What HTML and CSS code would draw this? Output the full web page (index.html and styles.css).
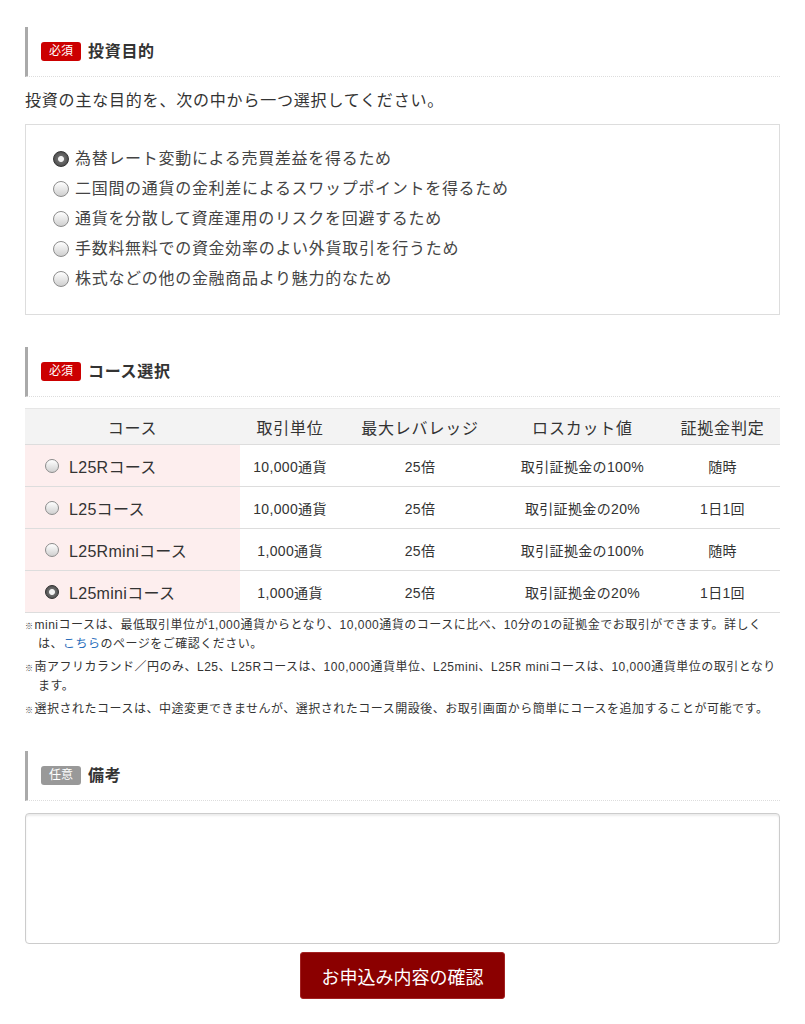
FILE: index.html
```html
<!DOCTYPE html>
<html lang="ja">

<head>
    <meta charset="UTF-8">
    <meta name="viewport" content="width=device-width, initial-scale=1.0">
    <title>お申込み - 投資目的・コース選択</title>
    <link rel="stylesheet" href="styles.css">
</head>

<body>
    <form class="apply-form">
        <!-- 投資目的 -->
        <section class="field">
            <h2 class="field-head"><span class="badge badge-required">必須</span>投資目的</h2>
            <p class="field-desc">投資の主な目的を、次の中から一つ選択してください。</p>
            <div class="choice-box">
                <label class="choice"><input type="radio" name="purpose" class="radio" checked>為替レート変動による売買差益を得るため</label>
                <label class="choice"><input type="radio" name="purpose" class="radio">二国間の通貨の金利差によるスワップポイントを得るため</label>
                <label class="choice"><input type="radio" name="purpose" class="radio">通貨を分散して資産運用のリスクを回避するため</label>
                <label class="choice"><input type="radio" name="purpose" class="radio">手数料無料での資金効率のよい外貨取引を行うため</label>
                <label class="choice"><input type="radio" name="purpose" class="radio">株式などの他の金融商品より魅力的なため</label>
            </div>
        </section>

        <!-- コース選択 -->
        <section class="field">
            <h2 class="field-head"><span class="badge badge-required">必須</span>コース選択</h2>
            <table class="course-table">
                <colgroup>
                    <col class="col-course">
                    <col class="col-unit">
                    <col class="col-leverage">
                    <col class="col-losscut">
                    <col class="col-margin">
                </colgroup>
                <thead>
                    <tr>
                        <th>コース</th>
                        <th>取引単位</th>
                        <th>最大レバレッジ</th>
                        <th>ロスカット値</th>
                        <th>証拠金判定</th>
                    </tr>
                </thead>
                <tbody>
                    <tr>
                        <td class="course-cell"><label class="course"><input type="radio" name="course" class="radio radio-sm">L25Rコース</label></td>
                        <td>10,000通貨</td>
                        <td>25倍</td>
                        <td>取引証拠金の100%</td>
                        <td>随時</td>
                    </tr>
                    <tr>
                        <td class="course-cell"><label class="course"><input type="radio" name="course" class="radio radio-sm">L25コース</label></td>
                        <td>10,000通貨</td>
                        <td>25倍</td>
                        <td>取引証拠金の20%</td>
                        <td>1日1回</td>
                    </tr>
                    <tr>
                        <td class="course-cell"><label class="course"><input type="radio" name="course" class="radio radio-sm">L25Rminiコース</label></td>
                        <td>1,000通貨</td>
                        <td>25倍</td>
                        <td>取引証拠金の100%</td>
                        <td>随時</td>
                    </tr>
                    <tr>
                        <td class="course-cell"><label class="course"><input type="radio" name="course" class="radio radio-sm" checked>L25miniコース</label></td>
                        <td>1,000通貨</td>
                        <td>25倍</td>
                        <td>取引証拠金の20%</td>
                        <td>1日1回</td>
                    </tr>
                </tbody>
            </table>
            <div class="notes">
                <p class="note"><span class="mark">※</span>miniコースは、最低取引単位が1,000通貨からとなり、10,000通貨のコースに比べ、10分の1の証拠金でお取引ができます。詳しくは、<a href="#" class="note-link">こちら</a>のページをご確認ください。</p>
                <p class="note"><span class="mark">※</span>南アフリカランド／円のみ、L25、L25Rコースは、100,000通貨単位、L25mini、L25R miniコースは、10,000通貨単位の取引となります。</p>
                <p class="note"><span class="mark">※</span>選択されたコースは、中途変更できませんが、選択されたコース開設後、お取引画面から簡単にコースを追加することが可能です。</p>
            </div>
        </section>

        <!-- 備考 -->
        <section class="field field-remarks">
            <h2 class="field-head"><span class="badge badge-optional">任意</span>備考</h2>
            <textarea class="remarks" name="remarks"></textarea>
        </section>

        <div class="actions">
            <button type="button" class="submit-btn">お申込み内容の確認</button>
        </div>
    </form>
</body>

</html>
```

FILE: styles.css
```css
/* Global Styles */

* {
    box-sizing: border-box;
    margin: 0;
    padding: 0;
}

body {
    font-family: "Liberation Sans", "Noto Sans CJK JP", sans-serif;
    color: #333;
    background-color: #ffffff;
    padding: 27px 25px 0;
}

/* Field Sections */

.field {
    margin-bottom: 32px;
}

.field-head {
    display: flex;
    align-items: center;
    gap: 7px;
    border-left: 3px solid #aaaaaa;
    border-bottom: 1px dotted #dddddd;
    padding: 14px 13px;
    font-size: 16px;
    line-height: 21px;
    font-weight: bold;
    letter-spacing: 0.7px;
    color: #333;
}

.badge {
    font-size: 12px;
    line-height: 15px;
    font-weight: normal;
    letter-spacing: 0;
    color: white;
    padding: 2px 8px;
    border-radius: 3px;
}

.badge-required {
    background-color: #cc0000;
}

.badge-optional {
    background-color: #999999;
}

.field-desc {
    margin: 12px 0 11px;
    font-size: 16px;
    line-height: 24px;
    letter-spacing: 0.8px;
}

/* Radio Choices */

.choice-box {
    border: 1px solid #dddddd;
    padding: 19px 27px 20px;
}

.choice {
    display: flex;
    align-items: center;
    gap: 6px;
    font-size: 16px;
    line-height: 30px;
    letter-spacing: 0.7px;
    color: #444;
}

.radio {
    appearance: none;
    -webkit-appearance: none;
    flex: none;
    width: 16px;
    height: 16px;
    border-radius: 50%;
    border: 1px solid #8c8c8c;
    background: linear-gradient(#ffffff, #d0d0d0);
    margin: 0;
}

.radio:checked {
    border-color: #333;
    background: radial-gradient(circle, #f2f2f2 0 2.5px, #6b6b6b 3.5px, #3a3a3a 100%);
}

.radio-sm {
    width: 14px;
    height: 14px;
}

/* Course Table */

.course-table {
    width: 100%;
    margin-top: 11px;
    border-collapse: collapse;
    table-layout: fixed;
}

.col-course {
    width: 215px;
}

.col-unit {
    width: 100px;
}

.col-leverage {
    width: 160px;
}

.col-losscut {
    width: 165px;
}

.col-margin {
    width: 115px;
}

.course-table th {
    height: 36px;
    background-color: #f3f3f3;
    border-top: 1px solid #e6e6e6;
    border-bottom: 1px solid #dddddd;
    font-size: 16px;
    font-weight: normal;
    letter-spacing: 0.8px;
    color: #333;
}

.course-table td {
    height: 42px;
    border-bottom: 1px solid #dddddd;
    font-size: 14px;
    letter-spacing: 0.35px;
    text-align: center;
    color: #333;
}

.course-table .course-cell {
    background-color: #fdeeee;
    text-align: left;
    padding-left: 20px;
}

.course {
    display: flex;
    align-items: center;
    gap: 10px;
    font-size: 16px;
    letter-spacing: 0.3px;
}

/* Notes */

.notes {
    margin-top: 3px;
}

.note {
    font-size: 12px;
    line-height: 19px;
    letter-spacing: 0.5px;
    padding-left: 13px;
    text-indent: -13px;
    margin-bottom: 4px;
}

.note:last-child {
    margin-bottom: 0;
}

.mark {
    font-size: 8px;
    line-height: 0;
    margin-right: 1px;
}

.note-link {
    color: #2a6ebb;
    text-decoration: none;
}

/* Remarks */

.field-remarks {
    margin-bottom: 8px;
}

.remarks {
    display: block;
    width: 100%;
    height: 131px;
    margin-top: 12px;
    border: 1px solid #cccccc;
    border-radius: 4px;
    box-shadow: inset 0 2px 2px rgba(0, 0, 0, 0.08);
    resize: none;
    font-family: inherit;
}

/* Submit */

.submit-btn {
    display: block;
    margin: 0 auto;
    width: 205px;
    height: 47px;
    background-color: #8b0000;
    color: #ffffff;
    border: 1px solid #a32222;
    border-radius: 3px;
    font-family: inherit;
    font-size: 18px;
    cursor: pointer;
}
```
